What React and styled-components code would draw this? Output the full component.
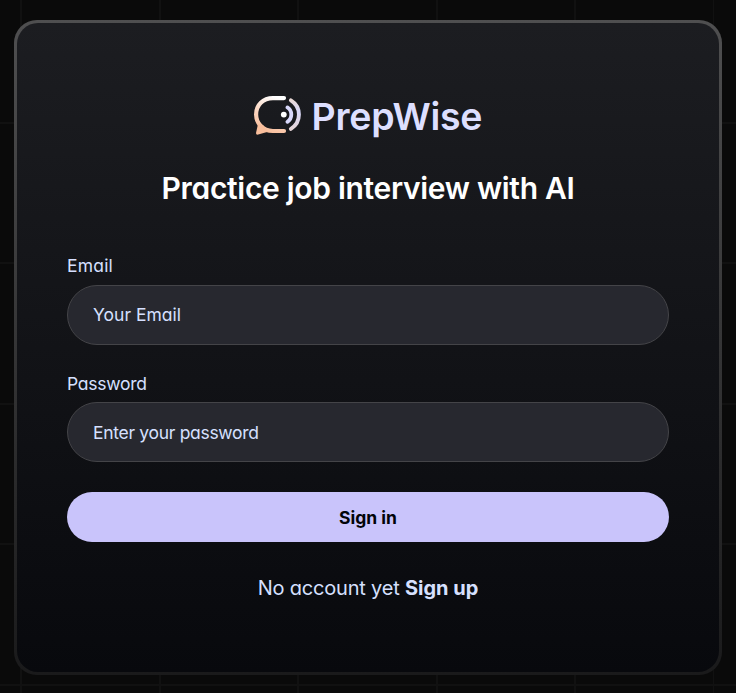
import React from "react";
import styled, { createGlobalStyle } from "styled-components";

const GlobalStyle = createGlobalStyle`
  * { box-sizing: border-box; }
  body {
    margin: 0;
    background: #0a0a0a;
    font-family: "Inter", "Liberation Sans", sans-serif;
    font-feature-settings: "cv11";
  }
`;

const Page = styled.main`
  width: 100%;
  height: 693px;
  padding: 20px 14px 18px;
  overflow: hidden;
  background:
    repeating-linear-gradient(90deg, transparent 0 20.5px, #111 20.5px 22px, transparent 22px 138.5px),
    repeating-linear-gradient(180deg, transparent 0 122px, #111 122px 124px, transparent 124px 140.4px),
    #0a0a0a;
`;

const CardBorder = styled.section`
  height: 655px;
  padding: 3px;
  border-radius: 23px;
  background: linear-gradient(180deg, #4f4f50 0%, #1a1a1b 100%);
`;

const Card = styled.div`
  display: flex;
  flex-direction: column;
  height: 100%;
  padding: 70px 50px 0;
  border-radius: 21px;
  background: linear-gradient(180deg, #1c1d21 0%, #08090d 100%);
`;

const Brand = styled.div`
  display: flex;
  align-items: center;
  justify-content: center;
  gap: 10px;
  height: 48px;
`;

const Logo = styled.svg`
  display: block;
  flex: none;
  width: 48px;
  height: 42px;
`;

const BrandName = styled.h2`
  margin: 0;
  width: 171px;
  color: #dddfff;
  font-size: 37.5px;
  font-weight: 600;
  line-height: 48px;
  letter-spacing: -0.25px;
  white-space: nowrap;
`;

const Title = styled.h1`
  margin: 25px 0 0;
  color: #fff;
  font-size: 30px;
  font-weight: 600;
  line-height: 45px;
  letter-spacing: -0.31px;
  text-align: center;
  white-space: nowrap;
`;

const Form = styled.form`
  display: flex;
  flex-direction: column;
  margin-top: 45px;
`;

const Field = styled.div`
  display: flex;
  flex-direction: column;
  justify-content: space-between;
  height: ${(p) => p.$height}px;
  margin-bottom: 29px;
`;

const Label = styled.label`
  color: #d6e0ff;
  font-size: 17.5px;
  line-height: 20px;
  letter-spacing: ${(p) => p.$tracking}px;
`;

const Input = styled.input`
  width: 100%;
  height: 60px;
  padding: 0 25px ${(p) => p.$lift || 0}px;
  border: 1px solid #444448;
  border-radius: 30px;
  outline: none;
  background: #27282f;
  color: #d6e0ff;
  font: inherit;
  font-feature-settings: inherit;
  font-size: 17.5px;
  letter-spacing: ${(p) => p.$tracking}px;
  &::placeholder { color: #d6e0ff; opacity: 1; }
`;

const SubmitButton = styled.button`
  height: 50px;
  margin-top: 1px;
  padding: 0;
  border: 0;
  border-radius: 25px;
  background: #c9c4fb;
  color: #020408;
  font: inherit;
  font-size: 17.5px;
  font-weight: 650;
  letter-spacing: 0;
`;

const Footer = styled.p`
  margin: 31px 0 0;
  color: #d6e0ff;
  font-size: 20px;
  line-height: 30px;
  letter-spacing: -0.2px;
  text-align: center;
`;

const SignUp = styled.a`
  color: #d6e0ff;
  font-weight: 700;
  letter-spacing: 0;
  text-decoration: none;
`;

function BrandLogo() {
  return (
    <Logo viewBox="0 0 48 42" fill="none" aria-hidden="true">
      <defs>
        <linearGradient id="bubble" x1="24" y1="2" x2="12" y2="36" gradientUnits="userSpaceOnUse">
          <stop stopColor="#fff" />
          <stop offset=".45" stopColor="#fbd9c6" />
          <stop offset="1" stopColor="#f8be9c" />
        </linearGradient>
        <linearGradient id="wave" x1="40" y1="4" x2="40" y2="33" gradientUnits="userSpaceOnUse">
          <stop stopColor="#ead9d6" />
          <stop offset=".4" stopColor="#d8d8fb" />
          <stop offset="1" stopColor="#e6d5d8" />
        </linearGradient>
      </defs>
      <path d="M30 2.1H19C9 2.1 2.1 9 2.1 18.6c0 4.5 1.6 8.2 4.4 11.2C9.5 33 13.5 35 19 35H30" stroke="url(#bubble)" strokeWidth="4.2" strokeLinecap="round" />
      <path d="M4 28L2 37Q2 39.2 4.2 38.6L14 35.7 9 29Z" fill="#f8be9c" />
      <circle cx="29.8" cy="18.6" r="2.9" fill="#fff" />
      <path d="M33.4 11.4c5.2 3.2 5.2 11.2 0 14.4" stroke="#d8d8fb" strokeWidth="3.8" strokeLinecap="round" />
      <path d="M36.9 4.3c10.7 6.6 10.7 22 0 28.6" stroke="url(#wave)" strokeWidth="3.9" strokeLinecap="round" />
    </Logo>
  );
}

export default function App() {
  return (
    <>
      <GlobalStyle />
      <Page>
        <CardBorder>
          <Card>
            <Brand>
              <BrandLogo />
              <BrandName>PrepWise</BrandName>
            </Brand>
            <Title>Practice job interview with AI</Title>
            <Form onSubmit={(e) => e.preventDefault()}>
              <Field $height={89}>
                <Label htmlFor="email" $tracking={0.2}>Email</Label>
                <Input id="email" type="email" placeholder="Your Email" $tracking={0} $lift={2} />
              </Field>
              <Field $height={88}>
                <Label htmlFor="password" $tracking={-0.25}>Password</Label>
                <Input id="password" type="password" placeholder="Enter your password" $tracking={-0.3} />
              </Field>
              <SubmitButton type="submit">Sign in</SubmitButton>
            </Form>
            <Footer>
              No account yet <SignUp>Sign up</SignUp>
            </Footer>
          </Card>
        </CardBorder>
      </Page>
    </>
  );
}
